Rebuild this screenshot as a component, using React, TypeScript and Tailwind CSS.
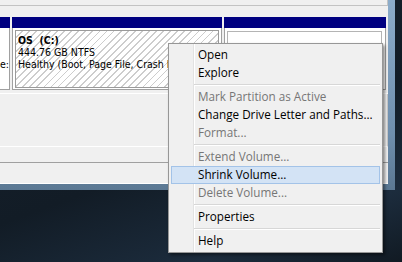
import React from "react";

type Item = { label?: string; sep?: boolean; disabled?: boolean; active?: boolean };

const items: Item[] = [
  { label: "Open" },
  { label: "Explore" },
  { sep: true },
  { label: "Mark Partition as Active", disabled: true },
  { label: "Change Drive Letter and Paths..." },
  { label: "Format...", disabled: true },
  { sep: true },
  { label: "Extend Volume...", disabled: true },
  { label: "Shrink Volume...", active: true },
  { label: "Delete Volume...", disabled: true },
  { sep: true },
  { label: "Properties" },
  { sep: true },
  { label: "Help" },
];

function ContextMenu() {
  return (
    <div className="absolute left-[168px] top-[43px] w-[215px] h-[210px] border border-[#979797] bg-[#f0f0f0] px-[2px] pt-[2px] shadow-[2px_2px_3px_rgba(0,0,0,0.45)] font-['Open_Sans',sans-serif] text-[11.7px]">
      <div className="absolute left-[24px] top-0 bottom-0 w-[2px] border-l border-[#e2e2e2] bg-white" />
      <div className="relative flex flex-col">
        {items.map((it, i) =>
          it.sep ? (
            <div key={i} className="h-[6px] flex flex-col justify-center pl-[23px]">
              <div className="h-[2px] border-t border-[#d7d7d7] bg-white" />
            </div>
          ) : (
            <div
              key={i}
              className={
                it.active
                  ? "h-[18px] flex items-center pl-[26px] border border-[#a3c3e8] bg-[#d3e3f5] text-black"
                  : it.disabled
                  ? "h-[18px] flex items-center pl-[26px] border border-transparent text-[#767676]"
                  : "h-[18px] flex items-center pl-[26px] border border-transparent text-black"
              }
            >
              {it.label}
            </div>
          )
        )}
      </div>
    </div>
  );
}

function DiskRow() {
  return (
    <div className="h-[73px] flex gap-[2px] font-['DejaVu_Sans_Condensed','Liberation_Sans_Narrow',sans-serif] text-[10.5px] leading-[12px] text-black">
      <div className="w-[10px] flex flex-col">
        <div className="h-[11px] bg-[#000080]" />
        <div className="flex-1 bg-white border-r border-b border-[#a0a0a0] overflow-hidden flex justify-end pt-[30px]">
          <span className="whitespace-nowrap">e:</span>
        </div>
      </div>
      <div className="w-[210px] flex flex-col">
        <div className="h-[11px] bg-[#000080]" />
        <div className="flex-1 bg-white border-l border-r border-b border-[#a0a0a0] px-[2px] pt-[2px] pb-[1px] flex">
          <div className="flex-1 border border-[#9a9a9a] bg-[repeating-linear-gradient(135deg,#ffffff_0px,#ffffff_3.7px,#cdcdcd_3.7px,#cdcdcd_5px)] pl-[2px] pt-[3px] overflow-hidden whitespace-nowrap">
            <div className="font-bold whitespace-pre">OS  (C:)</div>
            <div>444.76 GB NTFS</div>
            <div>Healthy (Boot, Page File, Crash Dump, Primary Partition)</div>
          </div>
        </div>
      </div>
      <div className="w-[162px] flex flex-col">
        <div className="h-[11px] bg-[#000080]" />
        <div className="flex-1 bg-white border-l border-r border-b border-[#a0a0a0] pl-[2px] pr-[3px] pt-[3px] pb-[2px] flex">
          <div className="flex-1 border border-[#b4b4b4] bg-white" />
        </div>
      </div>
    </div>
  );
}

export default function App() {
  return (
    <div className="relative w-[402px] h-[262px] overflow-hidden bg-[linear-gradient(160deg,#17222e_0%,#121c26_55%,#1c2c3d_82%,#111a23_100%)]">
      <div className="w-[395px] h-[190px] pr-[7px] pb-[6px] bg-[linear-gradient(180deg,#8cacca_0%,#6f8fae_70%,#5b7893_100%)]">
        <div className="w-[388px] h-[184px] bg-[#f0f0f0] flex flex-col">
          <div className="h-[6px] border-b border-r border-[#c3c3c3]" />
          <div className="h-[11px]" />
          <DiskRow />
          <div className="h-[4px] border-b border-white" />
          <div className="h-[53px] border-b border-r border-b-white border-r-[#c8c8c8]" />
          <div className="h-[16px] border-b border-[#a0a0a0]" />
          <div className="h-[21px] border-b border-white" />
        </div>
      </div>
      <ContextMenu />
    </div>
  );
}
